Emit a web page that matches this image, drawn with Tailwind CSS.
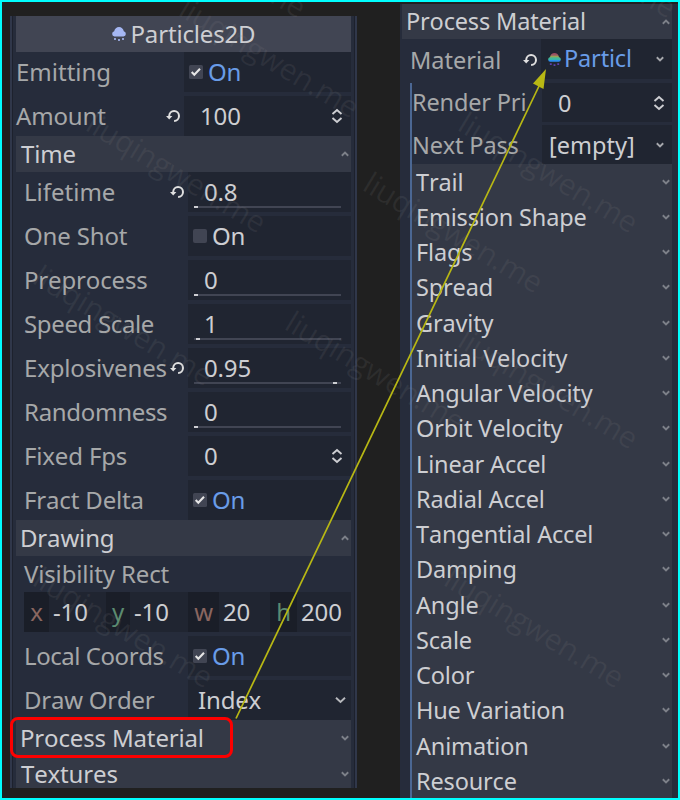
<!DOCTYPE html>
<html lang="en">
<head>
<meta charset="utf-8">
<title>Particles2D inspector</title>
<script src="https://cdn.jsdelivr.net/npm/@tailwindcss/browser@4"></script>
</head>
<body class="bg-[#202020]">
<svg class="hidden">
  <symbol id="up" viewBox="0 0 8 6"><path d="M.8 4.700 4 1.600 7.200 4.700" fill="none" stroke="#7d8189" stroke-width="1.900"/></symbol>
  <symbol id="down" viewBox="0 0 8 6"><path d="M.8 1.300 4 4.400 7.200 1.300" fill="none" stroke="currentColor" stroke-width="1.900"/></symbol>
  <symbol id="chevron" viewBox="0 0 11 8"><path d="M1 1.800 5.500 6 10 1.800" fill="none" stroke="currentColor" stroke-width="1.900"/></symbol>
  <symbol id="spin" viewBox="0 0 12 16"><path d="M1.500 6 6 2l4.500 4M1.500 10 6 14l4.500-4" fill="none" stroke="currentColor" stroke-width="1.900"/></symbol>
  <symbol id="revert" viewBox="0 0 14 12"><path d="M3.200 7V6a4.900 4.900 0 1 1 4.900 4.900" fill="none" stroke="#e0e0e0" stroke-width="2"/><path d="M0 5.900h6.400L3.200 9.400z" fill="#e0e0e0"/></symbol>
  <symbol id="check" viewBox="0 0 14 14"><rect width="14" height="14" rx="1.500" fill="#414553"/><path d="m2.700 7 2.600 2.700 5.700-6" fill="none" stroke="#e6e6e6" stroke-width="2.100"/></symbol>
</svg>
<main class="relative flex h-[800px] w-[680px] overflow-hidden border-2 border-[#00ffff] bg-[#202020] font-['Noto_Sans','Open_Sans',sans-serif] text-[24px] tracking-[-0.16px] whitespace-nowrap text-[#cdced2] [font-kerning:none]">

  <section class="mt-[14px] ml-2 h-[772px] w-[347px] shrink-0 overflow-hidden border-x-2 border-[#30374a] bg-[#262c3b]">
    <div class="h-full border-x border-[#1d212d] pr-[3px] pl-[3px]">
      <div class="flex h-9 items-center justify-center bg-[#414553] leading-9">
        <svg class="mr-[5px] h-[14px] w-[14px]" viewBox="0 0 14 14" fill="#a5b7f3"><path d="M2.500 9.500A2.700 2.700 0 0 1 2.200 4.200C2.700 1.800 4.600 0 7 0s4.300 1.800 4.800 4.200a2.700 2.700 0 0 1-.3 5.300z"/><path d="M2 11h2v2H2zM6 12h2v2H6zM10 11h2v2h-2z" opacity=".8"/></svg><span>Particles2D</span>
      </div>
      <div class="mb-1 flex h-10 leading-10">
        <div class="w-[168px] tracking-normal text-[#a6a8a9]">Emitting</div>
        <div class="flex flex-1 items-center bg-[#202531] pl-[5px] text-[#699ce8]"><svg class="mr-[5px] h-[14px] w-[14px]"><use href="#check"/></svg>On</div>
      </div>
      <div class="flex h-10 leading-10">
        <div class="flex w-[168px] items-center justify-between pr-1 text-[#a6a8a9]">Amount<svg class="h-3 w-[14px]"><use href="#revert"/></svg></div>
        <div class="flex flex-1 items-center justify-between bg-[#202531] pr-2 pl-4">100<svg class="h-4 w-3"><use href="#spin"/></svg></div>
      </div>
      <div class="flex h-9 items-center justify-between bg-[#343946] pr-[2px] pl-[5px] leading-9">Time<svg class="h-[6px] w-2"><use href="#up"/></svg></div>

      <div class="flex flex-col gap-1 pl-2 leading-10">
        <div class="flex h-10">
          <div class="flex w-[164px] items-center justify-between pr-[4px] text-[#a6a8a9]"><span class="tracking-normal">Lifetime</span><svg class="h-3 w-[14px]"><use href="#revert"/></svg></div>
          <div class="relative flex-1 bg-[#202531] pl-4">0.8<div class="absolute top-[34px] left-[6px] h-[2px] w-[147px] bg-[#414553]"><div class="h-[2px] w-1 bg-[#cdced2]"></div></div></div>
        </div>
        <div class="flex h-10">
          <div class="w-[164px] text-[#a6a8a9]">One Shot</div>
          <div class="flex flex-1 items-center bg-[#202531] pl-[5px]"><span class="mr-[5px] h-[14px] w-[14px] rounded-[2px] bg-[#414553]"></span>On</div>
        </div>
        <div class="flex h-10">
          <div class="w-[164px] text-[#a6a8a9]">Preprocess</div>
          <div class="relative flex-1 bg-[#202531] pl-4">0<div class="absolute top-[34px] left-[6px] h-[2px] w-[147px] bg-[#414553]"><div class="h-[2px] w-1 bg-[#cdced2]"></div></div></div>
        </div>
        <div class="flex h-10">
          <div class="w-[164px] tracking-[-0.35px] text-[#a6a8a9]">Speed Scale</div>
          <div class="relative flex-1 bg-[#202531] pl-4">1<div class="absolute top-[34px] left-[6px] h-[2px] w-[147px] bg-[#414553]"><div class="ml-[2px] h-[2px] w-1 bg-[#cdced2]"></div></div></div>
        </div>
        <div class="flex h-10">
          <div class="flex w-[164px] items-center justify-between pr-[4px] text-[#a6a8a9]"><span class="w-[143px]">Explosivenes</span><svg class="h-3 w-[14px] shrink-0"><use href="#revert"/></svg></div>
          <div class="relative flex-1 bg-[#202531] pl-4">0.95<div class="absolute top-[34px] left-[6px] h-[2px] w-[147px] bg-[#414553]"><div class="ml-[139px] h-[2px] w-1 bg-[#cdced2]"></div></div></div>
        </div>
        <div class="flex h-10">
          <div class="w-[164px] tracking-[-0.3px] text-[#a6a8a9]">Randomness</div>
          <div class="relative flex-1 bg-[#202531] pl-4">0<div class="absolute top-[34px] left-[6px] h-[2px] w-[147px] bg-[#414553]"><div class="h-[2px] w-1 bg-[#cdced2]"></div></div></div>
        </div>
        <div class="flex h-10">
          <div class="w-[164px] text-[#a6a8a9]">Fixed Fps</div>
          <div class="flex flex-1 items-center justify-between bg-[#202531] pr-2 pl-4">0<svg class="h-4 w-3"><use href="#spin"/></svg></div>
        </div>
        <div class="flex h-10">
          <div class="w-[164px] text-[#a6a8a9]">Fract Delta</div>
          <div class="flex flex-1 items-center bg-[#202531] pl-[5px] text-[#699ce8]"><svg class="mr-[5px] h-[14px] w-[14px]"><use href="#check"/></svg>On</div>
        </div>
      </div>

      <div class="flex h-9 items-center justify-between bg-[#343946] pr-[2px] pl-[4px] leading-9">Drawing<svg class="h-[6px] w-2"><use href="#up"/></svg></div>
      <div class="pl-2">
        <div class="h-9 leading-9 text-[#a6a8a9]">Visibility Rect</div>
        <div class="flex h-10 bg-[#202531] leading-10">
          <div class="flex w-[82px]"><span class="w-[25px] bg-[#1a1e28] text-center text-[#8a6660]">x</span><span class="pl-1">-10</span></div>
          <div class="flex w-[82px]"><span class="w-6 bg-[#1a1e28] text-center text-[#5c8b70]">y</span><span class="pl-1">-10</span></div>
          <div class="flex w-[82px]"><span class="w-[31px] bg-[#1a1e28] text-center text-[#8a6660]">w</span><span class="pl-1">20</span></div>
          <div class="flex w-[81px]"><span class="w-[27px] bg-[#1a1e28] text-center text-[#5c8b70]">h</span><span class="pl-1">200</span></div>
        </div>
        <div class="mt-1 flex h-10 leading-10">
          <div class="w-[164px] tracking-[-0.45px] text-[#a6a8a9]">Local Coords</div>
          <div class="flex flex-1 items-center bg-[#202531] pl-[5px] text-[#699ce8]"><svg class="mr-[5px] h-[14px] w-[14px]"><use href="#check"/></svg>On</div>
        </div>
        <div class="mt-1 flex h-10 leading-10">
          <div class="w-[164px] tracking-[-0.25px] text-[#a6a8a9]">Draw Order</div>
          <div class="flex flex-1 items-center justify-between bg-[#202531] pr-[5px] pl-[10px]">Index<svg class="h-2 w-[11px] text-[#b7b9bd]"><use href="#chevron"/></svg></div>
        </div>
      </div>
      <div class="flex h-9 items-center justify-between bg-[#343946] pr-[2px] pl-[4px] leading-9">Process Material<svg class="h-[6px] w-2 text-[#7d8189]"><use href="#down"/></svg></div>
      <div class="flex h-8 items-center justify-between bg-[#343946] pt-[4px] pr-[2px] pl-[5px] leading-8">Textures<svg class="h-[6px] w-2 text-[#7d8189]"><use href="#down"/></svg></div>
    </div>
  </section>

  <section class="mt-[2px] ml-[43px] h-[794px] w-[278px] shrink-0 overflow-hidden bg-[#262c3b] pr-[6px] pl-[2px] text-[23.5px]">
    <div class="flex h-[35px] items-center justify-between bg-[#343946] pr-[2px] pl-[4px] leading-[35px]">Process Material<svg class="h-[6px] w-2"><use href="#up"/></svg></div>
    <div class="flex h-10 leading-10">
      <div class="flex w-[139px] items-center justify-between pr-[4px] pl-2 text-[#a6a8a9]"><span class="pt-[2px] tracking-normal">Material</span><svg class="mt-[2px] h-3 w-[14px]"><use href="#revert"/></svg></div>
      <div class="flex flex-1 items-center bg-[#202531] pr-2 pl-[7px] text-[#699ce8]"><svg class="mr-[3px] h-[13px] w-[13px] shrink-0" viewBox="0 0 14 14"><defs><linearGradient id="rainbow" x1="0" y1="0" x2="0" y2="14" gradientUnits="userSpaceOnUse"><stop offset="0" stop-color="#a0405c"/><stop offset=".18" stop-color="#976264"/><stop offset=".25" stop-color="#a5a04c"/><stop offset=".38" stop-color="#44b995"/><stop offset=".52" stop-color="#35b5ad"/><stop offset=".58" stop-color="#2b8ff0"/><stop offset=".72" stop-color="#2b8ff0"/><stop offset=".78" stop-color="#6848c8"/><stop offset="1" stop-color="#6848b8"/></linearGradient></defs><path fill="url(#rainbow)" d="M2.500 9.500A2.700 2.700 0 0 1 2.200 4.200C2.700 1.800 4.600 0 7 0s4.300 1.800 4.800 4.200a2.700 2.700 0 0 1-.3 5.300z"/><path d="M2 11h2v2H2zM6 12h2v2H6zM10 11h2v2h-2z" fill="#5d40ac"/></svg><span class="h-10 w-[69px] overflow-hidden leading-[39px]">Particl</span><svg class="ml-auto h-[6px] w-2 text-[#a6a8ad]"><use href="#down"/></svg></div>
    </div>
    <div class="mt-1 ml-2 border-l-2 border-[#4b6793]">
      <div class="flex h-[39px] leading-[38px]">
        <div class="w-[130px] text-[#a6a8a9]">Render Pri</div>
        <div class="flex flex-1 items-center justify-between bg-[#202531] pr-[7px] pl-4">0<svg class="h-4 w-3"><use href="#spin"/></svg></div>
      </div>
      <div class="mt-[3px] flex h-[39px] leading-10">
        <div class="w-[130px] text-[#a6a8a9]">Next Pass</div>
        <div class="flex flex-1 items-center justify-between bg-[#202531] pr-2 pl-[7px] tracking-normal">[empty]<svg class="h-[6px] w-2 text-[#a6a8ad]"><use href="#down"/></svg></div>
      </div>
      <div id="groups" class="bg-[#343946]"></div>
    </div>
  </section>

  <div class="pointer-events-none absolute top-[715px] left-2 h-[41px] w-[223px] rounded-[8px] border-[3px] border-[#fd0000]"></div>
  <svg class="pointer-events-none absolute -top-[2px] -left-[2px] h-[800px] w-[680px]" viewBox="0 0 680 800">
    <g id="marks" class="font-['Open_Sans','Noto_Sans',sans-serif] text-[30px]" fill="#8c8c8c" fill-opacity=".12" text-anchor="middle"></g>
    <path d="M236 718.500 540 84" stroke="#b8b814" stroke-width="1.700"/>
    <path d="m546 69-13 14.500 10.500 5.500z" fill="#b8b814"/>
    <path d="M1 0V799H679V1H0" fill="none" stroke="#00ffff" stroke-width="2"/>
  </svg>
</main>
<script>
  const groups = ['Trail', 'Emission Shape', 'Flags', 'Spread', 'Gravity', 'Initial Velocity', 'Angular Velocity', 'Orbit Velocity', 'Linear Accel', 'Radial Accel', 'Tangential Accel', 'Damping', 'Angle', 'Scale', 'Color', 'Hue Variation', 'Animation', 'Resource'];
  document.getElementById('groups').innerHTML = groups.map(name =>
    `<div class="flex h-[35.25px] items-center justify-between pr-[2px] pl-[4px] leading-[36px]">${name}<svg class="h-[6px] w-2 text-[#7d8189]"><use href="#down"/></svg></div>`).join('');
  // Repeated site watermark, by centre point
  const marks = [[215, -40], [585, -40], [268, 60], [175, 175], [122, 328], [374, 374], [452, 235], [547, 175], [547, 391], [533, 630], [122, 630]];
  document.getElementById('marks').innerHTML = marks.map(([x, y]) =>
    `<text transform="translate(${x} ${y}) rotate(31)" y="8" textLength="203">liuqingwen.me</text>`).join('');
</script>
</body>
</html>
